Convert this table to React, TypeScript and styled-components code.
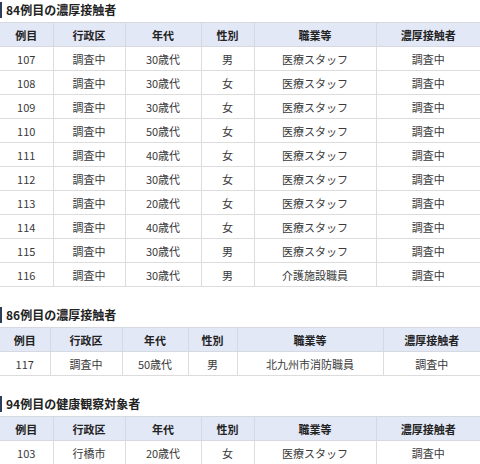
import React from 'react';
import styled, { createGlobalStyle } from 'styled-components';

const GlobalStyle = createGlobalStyle`
  html, body {
    margin: 0;
    padding: 0;
    background: #fff;
  }
  body {
    font-family: 'Noto Sans CJK JP', 'Noto Sans', sans-serif;
    color: #333;
  }
`;

const Page = styled.div`
  width: 480px;
  padding-top: 2px;
  display: flex;
  flex-direction: column;
`;

const Section = styled.section`
  & + & {
    margin-top: 20px;
  }
`;

const Heading = styled.h3`
  margin: 0 0 4px;
  padding-left: 4px;
  border-left: 2px solid #2e3d5c;
  font-size: 12px;
  line-height: 16px;
  font-weight: 700;
  color: #222;
`;

const Table = styled.table`
  width: 100%;
  border-collapse: collapse;
  table-layout: fixed;
  font-size: 11px;
`;

const HeadCell = styled.th`
  height: 23px;
  padding: 0;
  background: #e2e8f6;
  border: 1px solid #d6d9df;
  font-weight: 700;
  color: #222;
  text-align: center;

  &:first-child {
    border-left: none;
  }
  &:last-child {
    border-right: none;
  }
`;

const Cell = styled.td`
  height: 23px;
  padding: 0;
  border: 1px solid #dcdcdc;
  color: #3a3a3a;
  text-align: center;

  &:first-child {
    border-left: none;
  }
  &:last-child {
    border-right: none;
  }
`;

type Row = [string, string, string, string, string, string];

interface Props {
  title: string;
  widths: number[];
  rows: Row[];
}

const HEADERS = ['例目', '行政区', '年代', '性別', '職業等', '濃厚接触者'];

const CaseTable: React.FC<Props> = ({ title, widths, rows }) => (
  <Section>
    <Heading>{title}</Heading>
    <Table>
      <colgroup>
        {widths.map((w, i) => (
          <col key={i} style={{ width: w }} />
        ))}
      </colgroup>
      <thead>
        <tr>
          {HEADERS.map((h) => (
            <HeadCell key={h}>{h}</HeadCell>
          ))}
        </tr>
      </thead>
      <tbody>
        {rows.map((r) => (
          <tr key={r[0]}>
            {r.map((c, i) => (
              <Cell key={i}>{c}</Cell>
            ))}
          </tr>
        ))}
      </tbody>
    </Table>
  </Section>
);

const staff = (id: string, age: string, sex: string): Row => [
  id,
  '調査中',
  age,
  sex,
  '医療スタッフ',
  '調査中',
];

const rows84: Row[] = [
  staff('107', '30歳代', '男'),
  staff('108', '30歳代', '女'),
  staff('109', '30歳代', '女'),
  staff('110', '50歳代', '女'),
  staff('111', '40歳代', '女'),
  staff('112', '30歳代', '女'),
  staff('113', '20歳代', '女'),
  staff('114', '40歳代', '女'),
  staff('115', '30歳代', '男'),
  ['116', '調査中', '30歳代', '男', '介護施設職員', '調査中'],
];

const rows86: Row[] = [['117', '調査中', '50歳代', '男', '北九州市消防職員', '調査中']];

const rows94: Row[] = [['103', '行橋市', '20歳代', '女', '医療スタッフ', '調査中']];

const WIDE = [53, 72, 76, 53, 122, 104];
const NARROW = [50, 72, 66, 49, 146, 97];

export default function App() {
  return (
    <>
      <GlobalStyle />
      <Page>
        <CaseTable title="84例目の濃厚接触者" widths={WIDE} rows={rows84} />
        <CaseTable title="86例目の濃厚接触者" widths={NARROW} rows={rows86} />
        <CaseTable title="94例目の健康観察対象者" widths={WIDE} rows={rows94} />
      </Page>
    </>
  );
}
